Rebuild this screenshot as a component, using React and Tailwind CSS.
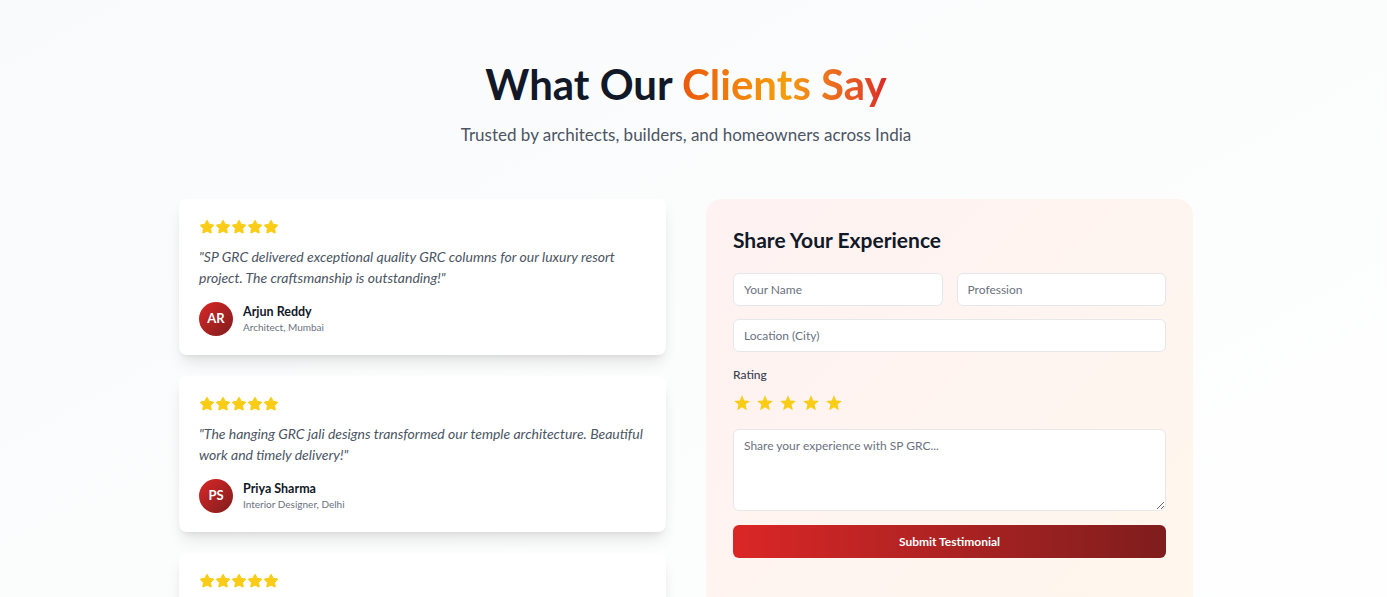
import { Star } from 'lucide-react';

const testimonials = [
  {
    id: 1,
    quote: '"SP GRC delivered exceptional quality GRC columns for our luxury resort project. The craftsmanship is outstanding!"',
    name: 'Arjun Reddy',
    role: 'Architect, Mumbai',
    initials: 'AR',
  },
  {
    id: 2,
    quote: '"The hanging GRC jali designs transformed our temple architecture. Beautiful work and timely delivery!"',
    name: 'Priya Sharma',
    role: 'Interior Designer, Delhi',
    initials: 'PS',
  },
  {
    id: 3,
    quote: '"Professional team and excellent finish on our villa facade elements. Highly recommended for any project!"',
    name: 'Rahul Mehta',
    role: 'Builder, Pune',
    initials: 'RM',
  },
];

function Stars() {
  return (
    <div className="flex mb-[11px]">
      {[0, 1, 2, 3, 4].map((i) => (
        <Star key={i} className="w-4 h-4 text-[#facc15] fill-[#facc15]" strokeWidth={1.5} />
      ))}
    </div>
  );
}

function RatingStar() {
  return (
    <svg viewBox="0 0 24 24" className="w-[18px] h-[18px] text-[#facc15]" fill="currentColor">
      <polygon points="12,1.5 14.9,8.6 22.5,9.2 16.7,14.1 18.5,21.5 12,17.5 5.5,21.5 7.3,14.1 1.5,9.2 9.1,8.6" />
    </svg>
  );
}

export default function App() {
  return (
    <div className="min-h-screen bg-gradient-to-br from-[#f9fafb] to-white" style={{ fontFamily: 'Lato, "Noto Sans", sans-serif' }}>
      <section className="w-[1372px] pt-[63px] pb-16">
        <div className="text-center mb-[50px]">
          <h1 className="text-[42px] font-bold text-[#111827] leading-none mb-[16px]">
            What Our{' '}
            <span className="bg-gradient-to-r from-[#ea580c] via-[#f59e0b] to-[#dc2626] bg-clip-text text-transparent">
              Clients Say
            </span>
          </h1>
          <p className="text-[17px] leading-7 text-[#4b5563]">Trusted by architects, builders, and homeowners across India</p>
        </div>

        <div className="w-[1014px] mx-auto grid grid-cols-2 gap-10">
          <div className="flex flex-col gap-[21px]">
            {testimonials.map((t) => (
              <div key={t.id} className="bg-white rounded-lg shadow-lg px-5 pt-5 pb-[19px]">
                <Stars />
                <p className="text-sm italic text-[#4b5563] leading-[21px] mb-[14px]">{t.quote}</p>
                <div className="flex items-center gap-[10px]">
                  <div className="w-[34px] h-[34px] rounded-full bg-gradient-to-br from-[#dc2626] to-[#7f1d1d] flex items-center justify-center text-white text-[13px] font-bold">
                    {t.initials}
                  </div>
                  <div>
                    <div className="text-[12.5px] font-bold text-[#111827] leading-4">{t.name}</div>
                    <div className="text-[10px] text-[#6b7280] leading-[14px]">{t.role}</div>
                  </div>
                </div>
              </div>
            ))}
          </div>

          <div className="rounded-2xl bg-gradient-to-br from-[#fef2f2] to-[#fff7ed] p-[27px]">
            <h2 className="text-[21px] leading-7 font-bold text-[#111827] mb-[19px]">Share Your Experience</h2>
            <form className="flex flex-col">
              <div className="grid grid-cols-2 gap-[14px] mb-[13px]">
                <input
                  className="h-[33px] px-[10px] text-xs bg-white border border-[#e5e7eb] rounded-md outline-none placeholder:text-[#6b7280]"
                  placeholder="Your Name"
                />
                <input
                  className="h-[33px] px-[10px] text-xs bg-white border border-[#e5e7eb] rounded-md outline-none placeholder:text-[#6b7280]"
                  placeholder="Profession"
                />
              </div>
              <input
                className="h-[33px] px-[10px] text-xs bg-white border border-[#e5e7eb] rounded-md outline-none placeholder:text-[#6b7280] mb-[15px]"
                placeholder="Location (City)"
              />
              <label className="text-xs font-medium text-[#374151] mb-[11px]">Rating</label>
              <div className="flex gap-[5px] mb-[17px]">
                {[0, 1, 2, 3, 4].map((i) => (
                  <RatingStar key={i} />
                ))}
              </div>
              <textarea
                rows={4}
                className="h-[82px] px-[10px] py-2 text-xs bg-white border border-[#e5e7eb] rounded-md outline-none resize-y placeholder:text-[#6b7280] mb-[14px]"
                placeholder="Share your experience with SP GRC..."
              />
              <button
                type="button"
                className="h-[33px] rounded-md bg-gradient-to-r from-[#dc2626] to-[#7f1d1d] text-white text-xs font-bold"
              >
                Submit Testimonial
              </button>
            </form>
          </div>
        </div>
      </section>
    </div>
  );
}
